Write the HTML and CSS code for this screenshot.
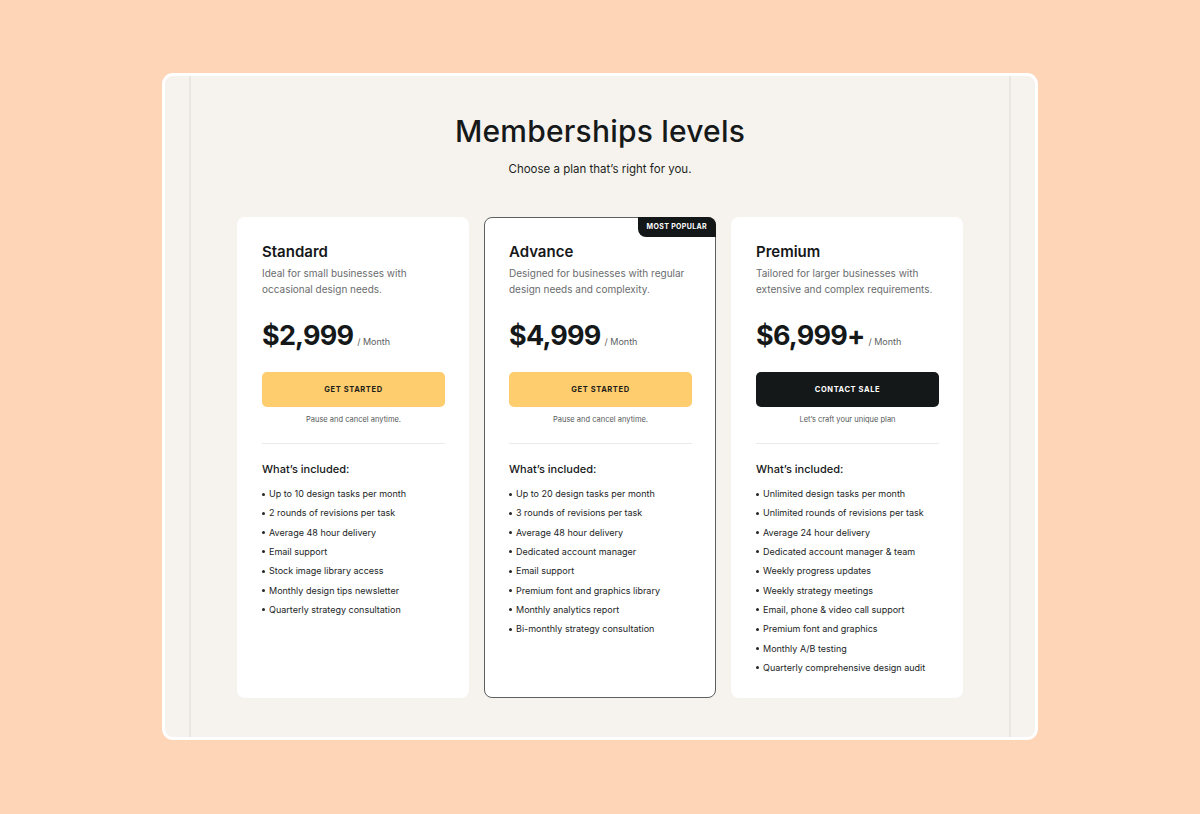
FILE: index.html
```html
<!DOCTYPE html>
<html lang="en">
<head>
<meta charset="utf-8">
<title>Memberships levels</title>
<link rel="stylesheet" href="styles.css">
</head>
<body>
<div class="frame">
  <div class="inner">
    <header class="head">
      <h1 class="title">Memberships levels</h1>
      <p class="subtitle">Choose a plan that’s right for you.</p>
    </header>
    <div class="plans">
      <section class="card">
        <h2 class="plan-name">Standard</h2>
        <p class="plan-desc">Ideal for small businesses with occasional design needs.</p>
        <div class="price"><span class="amount">$2,999</span><span class="per">/ Month</span></div>
        <button class="btn btn-yellow">GET STARTED</button>
        <p class="note">Pause and cancel anytime.</p>
        <hr class="divider">
        <h3 class="incl">What’s included:</h3>
        <ul class="features">
          <li>Up to 10 design tasks per month</li>
          <li>2 rounds of revisions per task</li>
          <li>Average 48 hour delivery</li>
          <li>Email support</li>
          <li>Stock image library access</li>
          <li>Monthly design tips newsletter</li>
          <li>Quarterly strategy consultation</li>
        </ul>
      </section>
      <section class="card card-popular">
        <span class="badge">MOST POPULAR</span>
        <h2 class="plan-name">Advance</h2>
        <p class="plan-desc">Designed for businesses with regular design needs and complexity.</p>
        <div class="price"><span class="amount">$4,999</span><span class="per">/ Month</span></div>
        <button class="btn btn-yellow">GET STARTED</button>
        <p class="note">Pause and cancel anytime.</p>
        <hr class="divider">
        <h3 class="incl">What’s included:</h3>
        <ul class="features">
          <li>Up to 20 design tasks per month</li>
          <li>3 rounds of revisions per task</li>
          <li>Average 48 hour delivery</li>
          <li>Dedicated account manager</li>
          <li>Email support</li>
          <li>Premium font and graphics library</li>
          <li>Monthly analytics report</li>
          <li>Bi-monthly strategy consultation</li>
        </ul>
      </section>
      <section class="card">
        <h2 class="plan-name">Premium</h2>
        <p class="plan-desc">Tailored for larger businesses with extensive and complex requirements.</p>
        <div class="price"><span class="amount">$6,999+</span><span class="per">/ Month</span></div>
        <button class="btn btn-dark">CONTACT SALE</button>
        <p class="note">Let’s craft your unique plan</p>
        <hr class="divider">
        <h3 class="incl">What’s included:</h3>
        <ul class="features">
          <li>Unlimited design tasks per month</li>
          <li>Unlimited rounds of revisions per task</li>
          <li>Average 24 hour delivery</li>
          <li>Dedicated account manager &amp; team</li>
          <li>Weekly progress updates</li>
          <li>Weekly strategy meetings</li>
          <li>Email, phone &amp; video call support</li>
          <li>Premium font and graphics</li>
          <li>Monthly A/B testing</li>
          <li>Quarterly comprehensive design audit</li>
        </ul>
      </section>
    </div>
  </div>
</div>
</body>
</html>
```

FILE: styles.css
```css
* { box-sizing: border-box; }
html, body { margin: 0; padding: 0; }
body {
  background: #FFD5B8;
  font-family: "Inter", "Noto Sans", sans-serif;
  color: #151819;
  width: 1200px;
  height: 814px;
  padding-top: 73px;
}
.frame {
  width: 876px;
  height: 667px;
  margin: 0 auto 0 162px;
  background: #F6F3EF;
  border: 3px solid #ffffff;
  border-radius: 11px;
  padding: 0 24px;
}
.inner {
  height: 100%;
  border-left: 2px solid #EAE6E1;
  border-right: 2px solid #EAE6E1;
  display: flex;
  flex-direction: column;
  align-items: center;
}
.head { text-align: center; padding-top: 35px; }
.title {
  margin: 0;
  font-size: 30px;
  font-weight: 500;
  letter-spacing: 0.2px;
  line-height: 40px;
  color: #16191A;
}
.subtitle {
  margin: 10px 0 0;
  font-size: 11.5px;
  line-height: 16px;
  color: #1c1f20;
}
.plans {
  margin-top: 40px;
  display: flex;
  gap: 15px;
}
.card {
  position: relative;
  width: 232px;
  height: 481px;
  background: #ffffff;
  border-radius: 8px;
  padding: 24px 23px 0 24px;
  border: 1px solid transparent;
}
.card-popular { border-color: #5d5f60; }
.badge {
  position: absolute;
  top: -1px;
  right: -1px;
  background: #141718;
  color: #ffffff;
  font-size: 7px;
  font-weight: 700;
  letter-spacing: 0.35px;
  height: 20px;
  line-height: 20px;
  padding: 0 9px;
  border-radius: 0 8px 0 8px;
}
.plan-name {
  margin: 0;
  font-size: 15px;
  font-weight: 600;
  line-height: 20px;
}
.plan-desc {
  margin: 3px 0 0;
  font-size: 10px;
  line-height: 16px;
  color: #6a6c6d;
}
.price {
  margin-top: 21px;
  display: flex;
  align-items: baseline;
  gap: 4px;
}
.amount {
  font-size: 27px;
  font-weight: 700;
  line-height: 36px;
  letter-spacing: -0.8px;
}
.per { font-size: 9px; color: #5c5e5f; }
.btn {
  display: block;
  width: 183px;
  height: 35px;
  margin-top: 18px;
  border: 0;
  border-radius: 5px;
  font-family: inherit;
  font-size: 7.5px;
  font-weight: 700;
  letter-spacing: 0.6px;
}
.btn-yellow { background: #FDCD6E; color: #1f1d18; }
.btn-dark { background: #141818; color: #ffffff; }
.note {
  margin: 8px 0 0;
  width: 183px;
  text-align: center;
  font-size: 7.5px;
  line-height: 10px;
  color: #55585a;
}
.divider {
  width: 183px;
  margin: 18px 0 0;
  border: 0;
  border-top: 1px solid #ECEAE8;
}
.incl {
  margin: 18px 0 0;
  font-size: 11px;
  font-weight: 500;
  line-height: 15px;
}
.features {
  list-style: none;
  margin: 7px 0 0;
  padding: 0;
}
.features li {
  position: relative;
  padding-left: 7px;
  font-size: 9px;
  line-height: 19.33px;
  color: #222526;
}
.features li::before {
  content: "";
  position: absolute;
  left: 0;
  top: 8.5px;
  width: 3px;
  height: 3px;
  border-radius: 50%;
  background: #222526;
}
```
